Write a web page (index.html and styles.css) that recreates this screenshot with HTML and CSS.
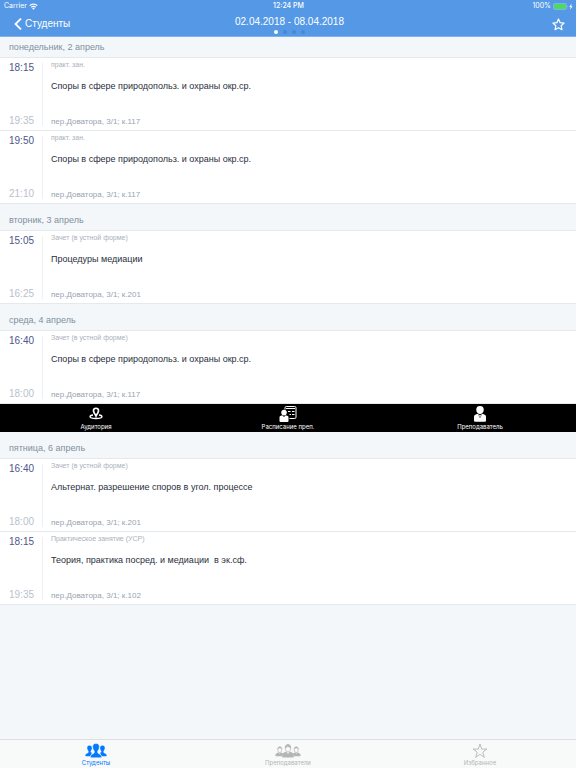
FILE: index.html
```html
<!DOCTYPE html>
<html lang="ru">
<head>
    <meta charset="UTF-8">
    <meta name="viewport" content="width=device-width, initial-scale=1.0">
    <title>Расписание</title>
    <link rel="stylesheet" href="styles.css">
</head>
<body>
    <header class="header">
        <div class="status-bar">
            <div class="status-left">
                <span>Carrier</span>
                <svg width="9" height="7" viewBox="0 0 18 14" fill="none" stroke="#fff" stroke-width="2.6">
                    <path d="M1.5 5.2a10.6 10.6 0 0 1 15 0M4.6 8.5a6.2 6.2 0 0 1 8.8 0"/>
                    <path d="M9 13.5l-2.6-2.6a3.7 3.7 0 0 1 5.2 0z" fill="#fff" stroke="none"/>
                </svg>
            </div>
            <div class="status-time">12:24 PM</div>
            <div class="status-right">
                <span>100%</span>
                <svg width="20" height="7" viewBox="0 0 20 7">
                    <rect x="0.5" y="0.5" width="13" height="6" rx="1.2" fill="none" stroke="#9cc3f0" stroke-width="0.6"/>
                    <rect x="1" y="1" width="12" height="5" rx="0.6" fill="#4cd964"/>
                    <path d="M14.3 2.5q1 1 0 2z" fill="#9cc3f0"/>
                    <path d="M18.600 0.400l-2.400 3.500h1.500l-.6 2.900 2.500-3.600h-1.500z" fill="#fff"/>
                </svg>
            </div>
        </div>
        <nav class="nav-bar">
            <a class="back" href="#">
                <svg width="8" height="12" viewBox="0 0 8 12" fill="none" stroke="#fff" stroke-width="1.8">
                    <path d="M7 0.600L1.500 6 7 11.400"/>
                </svg>
                <span>Студенты</span>
            </a>
            <div class="week">
                <h1>02.04.2018 - 08.04.2018</h1>
                <div class="dots">
                    <span class="dot active"></span>
                    <span class="dot"></span>
                    <span class="dot"></span>
                    <span class="dot"></span>
                </div>
            </div>
            <button class="favorite" type="button" aria-label="В избранное">
                <svg width="13" height="13" viewBox="0 0 24 24" fill="none" stroke="#fff" stroke-width="2.2" stroke-linejoin="round">
                    <path d="M12 2l3 6.700 7.300.8-5.400 4.900 1.500 7.200L12 18l-6.400 3.600 1.500-7.200L1.700 9.500 9 8.700z"/>
                </svg>
            </button>
        </nav>
    </header>

    <main class="schedule">
        <!-- Monday -->
        <section>
            <h2 class="day first">понедельник, 2 апрель</h2>
            <article class="lesson">
                <div class="time"><span>18:15</span><span class="end">19:35</span></div>
                <div class="info">
                    <p class="type">практ. зан.</p>
                    <h3>Споры в сфере природопольз. и охраны окр.ср.</h3>
                    <p class="place">пер.Доватора, 3/1; к.117</p>
                </div>
            </article>
            <article class="lesson">
                <div class="time"><span>19:50</span><span class="end">21:10</span></div>
                <div class="info">
                    <p class="type">практ. зан.</p>
                    <h3>Споры в сфере природопольз. и охраны окр.ср.</h3>
                    <p class="place">пер.Доватора, 3/1; к.117</p>
                </div>
            </article>
        </section>

        <!-- Tuesday -->
        <section>
            <h2 class="day">вторник, 3 апрель</h2>
            <article class="lesson">
                <div class="time"><span>15:05</span><span class="end">16:25</span></div>
                <div class="info">
                    <p class="type">Зачет (в устной форме)</p>
                    <h3>Процедуры медиации</h3>
                    <p class="place">пер.Доватора, 3/1; к.201</p>
                </div>
            </article>
        </section>

        <!-- Wednesday, with the lesson actions opened -->
        <section>
            <h2 class="day">среда, 4 апрель</h2>
            <article class="lesson">
                <div class="time"><span>16:40</span><span class="end">18:00</span></div>
                <div class="info">
                    <p class="type">Зачет (в устной форме)</p>
                    <h3>Споры в сфере природопольз. и охраны окр.ср.</h3>
                    <p class="place">пер.Доватора, 3/1; к.117</p>
                </div>
            </article>
            <div class="actions">
                <button type="button">
                    <svg width="18" height="18" viewBox="0 0 36 36" fill="none" stroke="#fff">
                        <path d="M18 22c-1.500-4-5-6-5-10.500a5 5 0 0 1 10 0c0 4.500-3.500 6.500-5 10.500z" stroke-width="3.400"/>
                        <path d="M12 20c-4 .5-6 2-6 3.500 0 2.300 5 3.500 12 3.500s12-1.200 12-3.500c0-1.500-2-3-6-3.500" stroke-width="2.6"/>
                    </svg>
                    <span>Аудитория</span>
                </button>
                <button type="button">
                    <svg width="18" height="18" viewBox="0 0 36 36" fill="#fff">
                        <path d="M12 9V5.500q0-2.500 2.500-2.500h17q2.500 0 2.500 2.500v19q0 2.500-2.500 2.500H21" fill="none" stroke="#fff" stroke-width="2"/>
                        <path d="M14 7h18M18 13h5M26 13h5M21 19h3M26 19h5" stroke="#fff" stroke-width="2.4"/>
                        <path d="M10 9.500c3.600 0 5.500 2.200 5.500 5.300 0 3.200-2.200 6.200-5.500 6.200s-5.500-3-5.500-6.200c0-3.100 1.900-5.300 5.500-5.300z"/>
                        <path d="M6.500 20.500L10 24l3.500-3.500 4 1.700q1.500.7 1.500 2.500V32q0 2-2 2H3q-2 0-2-2v-7.300q0-1.800 1.500-2.500z"/>
                    </svg>
                    <span>Расписание преп.</span>
                </button>
                <button type="button">
                    <svg width="18" height="18" viewBox="0 0 36 36" fill="#fff">
                        <path d="M18 2c5.500 0 7.500 3.200 7.500 7.500 0 4.700-3.200 8.500-7.500 8.500s-7.500-3.800-7.500-8.500C10.500 5.200 12.500 2 18 2z"/>
                        <path d="M13 17.500l5 3 5-3 4.500 2Q30 20.600 30 23.500V31q0 2.500-2.500 2.500h-19Q6 33.500 6 31v-7.500q0-2.900 2.500-4z"/>
                        <path d="M15 19.500l3 6 3-6" fill="none" stroke="#000" stroke-width="0.900"/>
                    </svg>
                    <span>Преподаватель</span>
                </button>
            </div>
        </section>

        <!-- Friday -->
        <section>
            <h2 class="day">пятница, 6 апрель</h2>
            <article class="lesson">
                <div class="time"><span>16:40</span><span class="end">18:00</span></div>
                <div class="info">
                    <p class="type">Зачет (в устной форме)</p>
                    <h3>Альтернат. разрешение споров в угол. процессе</h3>
                    <p class="place">пер.Доватора, 3/1; к.201</p>
                </div>
            </article>
            <article class="lesson">
                <div class="time"><span>18:15</span><span class="end">19:35</span></div>
                <div class="info">
                    <p class="type">Практическое занятие (УСР)</p>
                    <h3>Теория, практика посред. и медиации&nbsp; в эк.сф.</h3>
                    <p class="place">пер.Доватора, 3/1; к.102</p>
                </div>
            </article>
        </section>
    </main>

    <nav class="tab-bar">
        <a class="active" href="#">
            <svg width="22" height="16" viewBox="0 0 44 32" fill="currentColor">
                <path d="M9 5c3.500 0 5 2.500 4.700 5.500-.2 2.500-1.200 4.500-2.400 5.500v2.500l3.200 1.700c-2 1.200-3 3-3.200 6.300H1v-3c0-2.500 6-3 6-5V16c-1.200-1-2.200-3-2.500-5.500C4.200 7.500 5.500 5 9 5z"/>
                <path d="M35 5c-3.500 0-5 2.500-4.700 5.500.2 2.500 1.200 4.500 2.400 5.500v2.500l-3.200 1.700c2 1.200 3 3 3.200 6.300H43v-3c0-2.500-6-3-6-5V16c1.200-1 2.200-3 2.500-5.500C39.800 7.500 38.500 5 35 5z"/>
                <path d="M22 1c5 0 7 3 6.600 7.500-.3 3.200-1.600 6-3.300 7.500v3.200c0 2.500 7.700 3.300 7.700 7.300v3H11v-3c0-4 7.700-4.800 7.700-7.300V16c-1.700-1.500-3-4.300-3.300-7.500C15 4 17 1 22 1z" stroke="#f8f9f9" stroke-width="1"/>
            </svg>
            <span>Студенты</span>
        </a>
        <a href="#">
            <svg width="26" height="16" viewBox="0 0 52 32" fill="currentColor">
                <g fill="none" stroke="currentColor" stroke-width="1.5">
                    <path d="M5.500 13c0-3 1.500-5 4-5s4 2 4 5-1.500 6-4 6-4-3-4-6z"/>
                    <path d="M38.500 13c0-3 1.500-5 4-5s4 2 4 5-1.500 6-4 6-4-3-4-6z"/>
                    <path d="M20.500 10c0-4 2-6.500 5.500-6.500s5.500 2.500 5.500 6.500-2 8-5.500 8-5.500-4-5.500-8z"/>
                </g>
                <path d="M5 12c0-7 9-7 9 0-3 0-3-2-5-2-1 1-2 2-4 2zM38 12c0-7 9-7 9 0-3 0-3-2-5-2-1 1-2 2-4 2zM20 10c-1-10 13-10 12 0-4 0-5-3-7-3-1 2-3 3-5 3z"/>
                <path d="M7 18.500l2.500 3 2.500-3 4 2.500-2 5.500H1V23q0-2 6-4.500zM40 18.500l2.500 3 2.500-3q6 2.500 6 4.500v3.500H38L36 21z"/>
                <path d="M22.500 17l3.500 5 3.500-5q8 3 8 6v6h-23v-6q0-3 8-6z"/>
            </svg>
            <span>Преподаватели</span>
        </a>
        <a href="#">
            <svg width="16" height="16" viewBox="0 0 32 32" fill="none" stroke="currentColor" stroke-width="1.8">
                <path d="M16 2l3.400 10.200H30l-8.500 6.300 3.200 10.200L16 22.500l-8.700 6.200 3.200-10.200L2 12.200h10.600z"/>
            </svg>
            <span>Избранное</span>
        </a>
    </nav>
</body>
</html>
```
FILE: styles.css
```css
:root {
    --blue: #5599e6;
    --tint: #007aff;
    --page: #f3f7fa;
    --line: #e3e9ed;
}

* {
    box-sizing: border-box;
}

body {
    margin: 0;
    min-height: 100vh;
    display: flex;
    flex-direction: column;
    background: var(--page);
    color: #2a2f3d;
    font-family: "Liberation Sans", Arial, sans-serif;
}

h1, h2, h3, p {
    margin: 0;
    font-weight: normal;
}

svg {
    display: block;
}

a {
    text-decoration: none;
}

button {
    margin: 0;
    padding: 0;
    border: 0;
    background: none;
    color: inherit;
    font: inherit;
}

/* Header */
.header {
    background: var(--blue);
    color: #fff;
    border-bottom: 1px solid #82b1e6;
}

.status-bar {
    display: grid;
    grid-template-columns: 1fr auto 1fr;
    align-items: center;
    height: 12px;
    padding: 0 3px 0 4px;
    font-family: Inter, sans-serif;
    font-size: 7px;
    line-height: 12px;
}

.status-left,
.status-right {
    display: flex;
    align-items: center;
    gap: 2px;
}

.status-right {
    justify-content: flex-end;
}

.status-time {
    font-weight: 500;
}

.nav-bar {
    display: grid;
    grid-template-columns: 1fr auto 1fr;
    align-items: center;
    height: 24px;
    padding: 0 11px 0 14px;
}

.back {
    display: flex;
    align-items: center;
    gap: 3px;
    color: #fff;
    font-size: 10px;
    line-height: 12px;
}

.week h1 {
    padding-top: 2px;
    font-size: 10px;
    line-height: 14px;
}

.dots {
    display: flex;
    justify-content: center;
    align-items: center;
    gap: 5px;
    height: 6px;
}

.dot {
    width: 4px;
    height: 4px;
    border-radius: 50%;
    background: #4588d3;
}

.dot.active {
    background: #fff;
}

.favorite {
    justify-self: end;
}

/* Schedule */
.schedule {
    flex: 1;
}

.day {
    padding: 9px 9px 3px;
    border-bottom: 1px solid var(--line);
    color: #7f909e;
    font-size: 9px;
    line-height: 14px;
}

.day.first {
    padding: 3px 9px;
}

.lesson {
    display: flex;
    min-height: 73px;
    padding: 3px 9px 4px;
    background: #fff;
    border-bottom: 1px solid var(--line);
}

.time {
    display: flex;
    flex-direction: column;
    justify-content: space-between;
    width: 34px;
    margin-top: 2px;
    border-right: 1px solid #eef1f3;
    color: #4d5788;
    font-size: 10px;
    line-height: 10px;
}

.time .end {
    color: #b9c1ce;
}

.info {
    display: flex;
    flex-direction: column;
    flex: 1;
    padding-left: 8px;
}

.type {
    color: #a9b1bb;
    font-size: 7px;
    line-height: 8px;
}

.info h3 {
    margin-top: 11px;
    font-size: 9px;
    line-height: 12px;
}

.place {
    margin-top: auto;
    color: #98a3b1;
    font-size: 8px;
    line-height: 8px;
}

/* Actions under the selected lesson */
.actions {
    display: grid;
    grid-template-columns: repeat(3, 1fr);
    background: #000;
    color: #fff;
}

.actions button {
    display: flex;
    flex-direction: column;
    align-items: center;
    padding: 1px 0;
    font-family: Inter, sans-serif;
    font-size: 6px;
    line-height: 8px;
}

/* Bottom tabs */
.tab-bar {
    display: grid;
    grid-template-columns: repeat(3, 1fr);
    background: #f8f9f9;
    border-top: 1px solid #dde0e2;
}

.tab-bar a {
    display: flex;
    flex-direction: column;
    align-items: center;
    padding: 3px 0 1px;
    color: #b5b5b5;
    font-family: Inter, sans-serif;
    font-size: 6px;
    line-height: 8px;
}

.tab-bar a.active {
    color: var(--tint);
}
```
